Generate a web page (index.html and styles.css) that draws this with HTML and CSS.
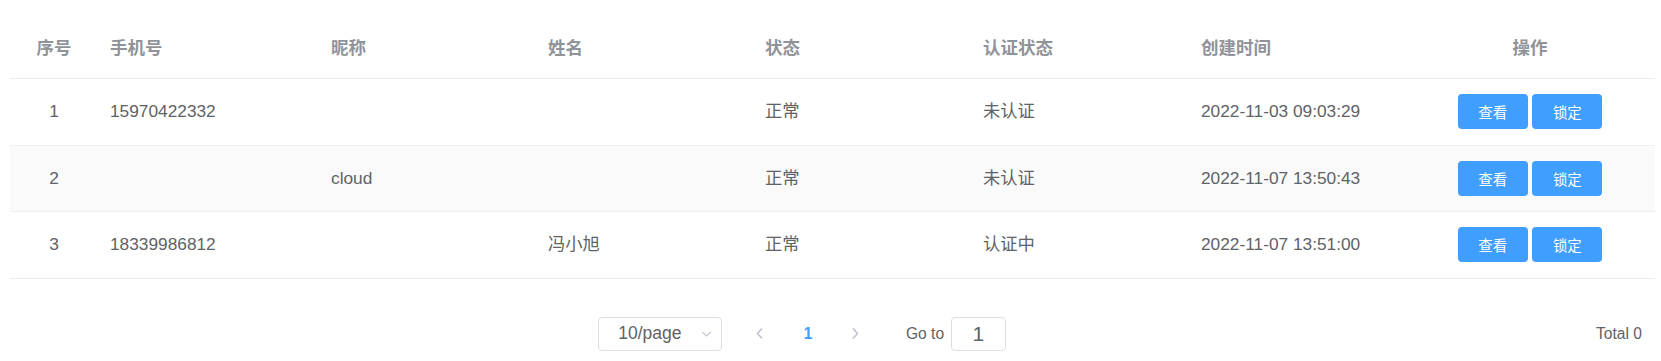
FILE: index.html
```html
<!DOCTYPE html>
<html lang="zh-CN">
<head>
<meta charset="utf-8">
<title>用户列表</title>
<link rel="stylesheet" href="styles.css">
</head>
<body>
<div class="page">
  <div class="table">
    <div class="row head">
      <div class="cell center">序号</div>
      <div class="cell">手机号</div>
      <div class="cell">昵称</div>
      <div class="cell">姓名</div>
      <div class="cell">状态</div>
      <div class="cell">认证状态</div>
      <div class="cell">创建时间</div>
      <div class="cell center">操作</div>
    </div>
    <div class="row">
      <div class="cell center">1</div>
      <div class="cell">15970422332</div>
      <div class="cell"></div>
      <div class="cell"></div>
      <div class="cell">正常</div>
      <div class="cell">未认证</div>
      <div class="cell">2022-11-03 09:03:29</div>
      <div class="cell ops"><button class="btn">查看</button><button class="btn">锁定</button></div>
    </div>
    <div class="row striped">
      <div class="cell center">2</div>
      <div class="cell"></div>
      <div class="cell">cloud</div>
      <div class="cell"></div>
      <div class="cell">正常</div>
      <div class="cell">未认证</div>
      <div class="cell">2022-11-07 13:50:43</div>
      <div class="cell ops"><button class="btn">查看</button><button class="btn">锁定</button></div>
    </div>
    <div class="row">
      <div class="cell center">3</div>
      <div class="cell">18339986812</div>
      <div class="cell"></div>
      <div class="cell">冯小旭</div>
      <div class="cell">正常</div>
      <div class="cell">认证中</div>
      <div class="cell">2022-11-07 13:51:00</div>
      <div class="cell ops"><button class="btn">查看</button><button class="btn">锁定</button></div>
    </div>
  </div>

  <div class="pager">
    <div class="select">
      <span class="select-text">10/page</span>
      <svg class="select-arrow" width="11" height="6" viewBox="0 0 11 6"><path d="M1 0.8 L5.5 5 L10 0.8" fill="none" stroke="#C0C4CC" stroke-width="1.1"/></svg>
    </div>
    <div class="nav prev">
      <svg width="9" height="13" viewBox="0 0 9 13"><path d="M7 1.5 L2.5 6.5 L7 11.5" fill="none" stroke="#C0C4CC" stroke-width="1.6"/></svg>
    </div>
    <div class="nav num">1</div>
    <div class="nav next">
      <svg width="9" height="13" viewBox="0 0 9 13"><path d="M2 1.5 L6.5 6.5 L2 11.5" fill="none" stroke="#C0C4CC" stroke-width="1.6"/></svg>
    </div>
    <div class="jumper">
      <span class="goto">Go to</span>
      <div class="jump-input">1</div>
    </div>
    <div class="total">Total 0</div>
  </div>
</div>
</body>
</html>
```

FILE: styles.css
```css
html, body {
  margin: 0;
  padding: 0;
  background: #ffffff;
}

body {
  font-family: "Liberation Sans", "Noto Sans CJK SC", sans-serif;
  color: #606266;
}

.page {
  padding: 19px 6px 0 10px;
}

.table {
  width: 1645px;
}

.row {
  display: grid;
  grid-template-columns: 88px 221px 217px 217px 218px 218px 216px 1fr;
  align-items: center;
  height: 66.5px;
  box-sizing: border-box;
  border-bottom: 1px solid #EBEEF5;
  font-size: 17.3px;
  color: #606266;
}

.row.head {
  height: 60px;
  color: #909399;
  font-weight: bold;
  font-size: 17.5px;
}

.row.striped {
  background: #FAFAFA;
}

.cell {
  padding-left: 12px;
  white-space: nowrap;
  line-height: 23px;
}

.cell.center {
  padding-left: 0;
  text-align: center;
}

.cell.ops {
  padding-left: 0;
  display: flex;
  justify-content: center;
  gap: 4.6px;
}

.btn {
  width: 70px;
  height: 34.6px;
  border: none;
  border-radius: 4px;
  background: #409EFF;
  color: #ffffff;
  font-family: "Liberation Sans", "Noto Sans CJK SC", sans-serif;
  font-size: 14.4px;
  padding: 0;
  cursor: pointer;
}

.pager {
  width: 1645px;
  box-sizing: border-box;
  margin-top: 38px;
  height: 34.4px;
  display: flex;
  align-items: center;
  padding-left: 588.3px;
  padding-right: 13px;
}

.select {
  width: 124px;
  height: 34.4px;
  box-sizing: border-box;
  border: 1px solid #DCDFE6;
  border-radius: 4px;
  display: flex;
  align-items: center;
  padding-left: 19px;
  padding-right: 9.5px;
  font-size: 17.5px;
  color: #606266;
}

.select-arrow {
  margin-left: auto;
}

.nav {
  width: 48px;
  height: 34px;
  display: flex;
  align-items: center;
  justify-content: center;
}

.nav.prev {
  margin-left: 13.7px;
}

.nav.num {
  color: #409EFF;
  font-weight: bold;
  font-size: 16px;
}

.jumper {
  margin-left: 26px;
  display: flex;
  align-items: center;
  font-size: 15.6px;
  color: #606266;
}

.jump-input {
  margin-left: 6.7px;
  width: 55.3px;
  height: 34px;
  box-sizing: border-box;
  border: 1px solid #DCDFE6;
  border-radius: 4px;
  display: flex;
  align-items: center;
  justify-content: center;
  font-size: 21px;
  color: #606266;
}

.total {
  margin-left: auto;
  font-size: 15.6px;
  color: #606266;
}
```
